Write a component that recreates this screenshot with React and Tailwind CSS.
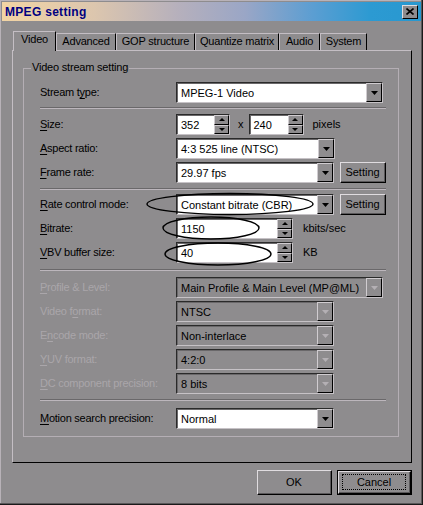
import React from "react";

const BG = "bg-[#8e8c8e]";

function Tri({ dir = "down", disabled = false, w = 7, h = 4 }) {
  return (
    <svg width={w} height={h} viewBox={`0 0 ${w} ${h}`}>
      <path
        d={dir === "down" ? `M0 0H${w}L${w / 2} ${h}Z` : `M0 ${h}H${w}L${w / 2} 0Z`}
        fill={disabled ? "#b4b0b4" : "#000"}
      />
    </svg>
  );
}

function Combo({ value, w, disabled = false }) {
  return (
    <div
      className={`flex h-[21px] ${w} border border-t-[#2a2a2a] border-l-[#2a2a2a] border-b-[#c6c2c6] border-r-[#c6c2c6]`}
    >
      <div
        className={`flex flex-1 items-center pl-[3px] ${disabled ? "bg-transparent" : "bg-white"} border-t border-l border-t-[#6a686a] border-l-[#6a686a]`}
      >
        {value}
      </div>
      <div className={`flex w-[16px] items-center justify-center ${BG} border border-t-[#d0ccd0] border-l-[#d0ccd0] border-b-black border-r-black`}>
        <Tri disabled={disabled} />
      </div>
    </div>
  );
}

function Spin({ value, w }) {
  return (
    <div
      className={`flex h-[21px] ${w} border border-t-[#2a2a2a] border-l-[#2a2a2a] border-b-[#c6c2c6] border-r-[#c6c2c6]`}
    >
      <div className="flex flex-1 items-center pl-[3px] bg-white border-t border-l border-t-[#6a686a] border-l-[#6a686a]">
        {value}
      </div>
      <div className="flex w-[15px] flex-col">
        <div className={`flex flex-1 items-center justify-center ${BG} border border-t-[#d0ccd0] border-l-[#d0ccd0] border-b-black border-r-black`}>
          <Tri dir="up" w={6} h={3} />
        </div>
        <div className={`flex flex-1 items-center justify-center ${BG} border border-t-[#d0ccd0] border-l-[#d0ccd0] border-b-black border-r-black`}>
          <Tri w={6} h={3} />
        </div>
      </div>
    </div>
  );
}

function Btn({ children, w, h, focus = false }) {
  return (
    <div className={`${w} ${h} ${focus ? "border border-black" : ""}`}>
      <div className={`flex h-full w-full items-center justify-center ${BG} border border-t-[#e0dce0] border-l-[#e0dce0] border-b-black border-r-black`}>
        <div className={`flex h-full w-full items-center justify-center border-b border-r border-b-[#5a585a] border-r-[#5a585a]`}>
          <div className={`flex items-center justify-center ${focus ? "h-[calc(100%-4px)] w-[calc(100%-6px)] border border-dotted border-black" : ""}`}>
            {children}
          </div>
        </div>
      </div>
    </div>
  );
}

function Label({ children, disabled = false }) {
  return (
    <div className={`w-[136px] shrink-0 tracking-[-0.25px] ${disabled ? "text-[#aaa6aa]" : "text-black"}`}>
      {children}
    </div>
  );
}

function Row({ children }) {
  return <div className="flex h-[21px] items-center">{children}</div>;
}

function Sep({ cls }) {
  return <div className={`w-[346px] border-t border-b border-t-[#6a686a] border-b-[#bcb6bc] ${cls}`} />;
}

const U = ({ children }) => <span className="underline underline-offset-[2px]">{children}</span>;

function Tab({ label, w, selected = false }) {
  return (
    <div
      className={`flex ${w} items-start justify-center ${BG} border-t border-l border-t-[#c4bec4] border-l-[#c4bec4] border-r border-r-black ${
        selected ? "relative z-10 -mb-px h-[20px] pt-[2px]" : "h-[17px] pt-[2px]"
      }`}
    >
      <span className="tracking-[-0.2px]">{label}</span>
    </div>
  );
}

export default function App() {
  return (
    <div
      className={`relative h-[505px] w-[423px] overflow-hidden ${BG} font-['Liberation_Sans',Arial,sans-serif] text-[11px] leading-none text-black shadow-[inset_-1px_-1px_0_#1a1a1a,inset_-2px_-2px_0_#5a585a,inset_1px_1px_0_#b8b2b8]`}
    >
      {/* Title bar */}
      <div className="mx-[2px] mt-[2px] flex h-[19px] items-center bg-[linear-gradient(90deg,#f2d4a4_0%,#dcc6ae_22%,#b6b0bc_42%,#9aa6c6_58%,#5c9ed2_74%,#2c9ad2_88%,#2898d0_100%)] pl-[3px] pr-[3px]">
        <span className="text-[12px] font-bold tracking-[0.3px] text-[#000080]">MPEG setting</span>
        <div className={`ml-auto flex h-[14px] w-[16px] items-center justify-center ${BG} border border-t-[#e0dce0] border-l-[#e0dce0] border-b-black border-r-black`}>
          <svg width="8" height="7" viewBox="0 0 8 7">
            <path d="M0.5 0.5L7.5 6.5M7.5 0.5L0.5 6.5" stroke="#000" strokeWidth="1.6" />
          </svg>
        </div>
      </div>

      {/* Tabs + panel */}
      <div className="pl-[12px] pt-[10px]">
        <div className="flex items-end pl-[1px]">
          <Tab label="Video" w="w-[43px]" selected />
          <Tab label="Advanced" w="w-[60px]" />
          <Tab label="GOP structure" w="w-[79px]" />
          <Tab label="Quantize matrix" w="w-[84px]" />
          <Tab label="Audio" w="w-[41px]" />
          <Tab label="System" w="w-[47px]" />
        </div>
        <div className="h-[413px] w-[400px] border border-t-[#c4bec4] border-l-[#c4bec4] border-b-black border-r-black pl-[10px] pt-[17px]">
          {/* Group box */}
          <div className="relative h-[369px] w-[376px] border border-[#b4aeb4] pl-[16px] pt-[13px]">
            <div className={`absolute -top-[7px] left-[7px] ${BG} px-[1px] tracking-[-0.2px]`}>Video stream setting</div>

            <Row>
              <Label>Stream t<U>y</U>pe:</Label>
              <Combo value="MPEG-1 Video" w="w-[207px]" />
            </Row>
            <Sep cls="mt-[4px] mb-[5px]" />
            <div className="flex flex-col gap-[3px]">
              <Row>
                <Label><U>S</U>ize:</Label>
                <Spin value="352" w="w-[54px]" />
                <span className="ml-[8px]">x</span>
                <div className="ml-[5px]"><Spin value="240" w="w-[55px]" /></div>
                <span className="ml-[9px]">pixels</span>
              </Row>
              <Row>
                <Label><U>A</U>spect ratio:</Label>
                <Combo value="4:3 525 line (NTSC)" w="w-[159px]" />
              </Row>
              <Row>
                <Label><U>F</U>rame rate:</Label>
                <Combo value="29.97 fps" w="w-[158px]" />
                <div className="ml-[6px]"><Btn w="w-[46px]" h="h-[21px]">Setting</Btn></div>
              </Row>
            </div>
            <Sep cls="mt-[5px] mb-[4px]" />
            <div className="flex flex-col gap-[3px]">
              <Row>
                <Label><U>R</U>ate control mode:</Label>
                <Combo value="Constant bitrate (CBR)" w="w-[158px]" />
                <div className="ml-[6px]"><Btn w="w-[46px]" h="h-[21px]">Setting</Btn></div>
              </Row>
              <Row>
                <Label><U>B</U>itrate:</Label>
                <Spin value="1150" w="w-[117px]" />
                <span className="ml-[10px]">kbits/sec</span>
              </Row>
              <Row>
                <Label><U>V</U>BV buffer size:</Label>
                <Spin value="40" w="w-[117px]" />
                <span className="ml-[10px]">KB</span>
              </Row>
            </div>
            <Sep cls="mt-[6px] mb-[6px]" />
            <div className="flex flex-col gap-[3px]">
              <Row>
                <Label disabled><U>P</U>rofile &amp; Level:</Label>
                <Combo value="Main Profile & Main Level (MP@ML)" w="w-[207px]" disabled />
              </Row>
              <Row>
                <Label disabled>Video f<U>o</U>rmat:</Label>
                <Combo value="NTSC" w="w-[158px]" disabled />
              </Row>
              <Row>
                <Label disabled>E<U>n</U>code mode:</Label>
                <Combo value="Non-interlace" w="w-[158px]" disabled />
              </Row>
              <Row>
                <Label disabled><U>Y</U>UV format:</Label>
                <Combo value="4:2:0" w="w-[158px]" disabled />
              </Row>
              <Row>
                <Label disabled><U>D</U>C component precision:</Label>
                <Combo value="8 bits" w="w-[158px]" disabled />
              </Row>
            </div>
            <Sep cls="mt-[5px] mb-[7px]" />
            <Row>
              <Label><U>M</U>otion search precision:</Label>
              <Combo value="Normal" w="w-[158px]" />
            </Row>
          </div>
        </div>
      </div>

      {/* Bottom buttons */}
      <div className="mt-[7px] flex justify-end gap-[5px] pr-[11px]">
        <Btn w="w-[75px]" h="h-[25px]">OK</Btn>
        <Btn w="w-[75px]" h="h-[25px]" focus>Cancel</Btn>
      </div>

      {/* Hand-drawn annotation ellipses */}
      <svg className="pointer-events-none absolute left-0 top-0" width="423" height="505" viewBox="0 0 423 505">
        <ellipse cx="230" cy="204" rx="83" ry="10.5" fill="none" stroke="#000" strokeWidth="1.4" />
        <ellipse cx="211" cy="228" rx="48" ry="11" fill="none" stroke="#000" strokeWidth="1.4" />
        <ellipse cx="218" cy="254" rx="53" ry="11" fill="none" stroke="#000" strokeWidth="1.4" />
      </svg>
    </div>
  );
}
